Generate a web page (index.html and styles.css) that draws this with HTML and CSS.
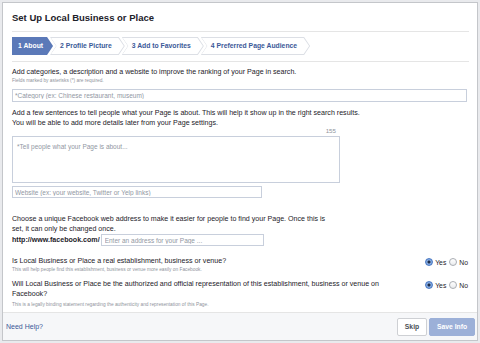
FILE: index.html
```html
<!DOCTYPE html>
<html>
<head>
<meta charset="utf-8">
<link rel="stylesheet" href="styles.css">
</head>
<body>
<div class="dialog">
  <div class="main">
    <h1 class="title">Set Up Local Business or Place</h1>
    <div class="tabs">
      <div class="tab first active"><span class="tab-in">1 About</span></div>
      <div class="tab"><span class="tab-in">2 Profile Picture</span></div>
      <div class="tab"><span class="tab-in">3 Add to Favorites</span></div>
      <div class="tab"><span class="tab-in">4 Preferred Page Audience</span></div>
    </div>
    <div class="content">
      <p class="text intro">Add categories, a description and a website to improve the ranking of your Page in search.</p>
      <p class="small">Fields marked by asterisks (*) are required.</p>
      <input class="field category" type="text" placeholder="*Category (ex: Chinese restaurant, museum)">
      <p class="text about">Add a few sentences to tell people what your Page is about. This will help it show up in the right search results. You will be able to add more details later from your Page settings.</p>
      <div class="counter">155</div>
      <textarea class="field area" placeholder="*Tell people what your Page is about..."></textarea>
      <input class="field website" type="text" placeholder="Website (ex: your website, Twitter or Yelp links)">
      <p class="text choose">Choose a unique Facebook web address to make it easier for people to find your Page. Once this is set, it can only be changed once.</p>
      <div class="url-row">
        <span class="url">http://www.facebook.com/</span>
        <input class="field address" type="text" placeholder="Enter an address for your Page ...">
      </div>
      <div class="question q1">
        <div class="q-text">
          <p class="text">Is Local Business or Place a real establishment, business or venue?</p>
          <p class="small">This will help people find this establishment, business or venue more easily on Facebook.</p>
        </div>
        <div class="radios">
          <span class="radio checked"></span><span class="rlabel">Yes</span>
          <span class="radio"></span><span class="rlabel">No</span>
        </div>
      </div>
      <div class="question q2">
        <div class="q-text">
          <p class="text">Will Local Business or Place be the authorized and official representation of this establishment, business or venue on Facebook?</p>
          <p class="small s2">This is a legally binding statement regarding the authenticity and representation of this Page.</p>
        </div>
        <div class="radios">
          <span class="radio checked"></span><span class="rlabel">Yes</span>
          <span class="radio"></span><span class="rlabel">No</span>
        </div>
      </div>
    </div>
  </div>
  <div class="footer">
    <a class="help" href="#">Need Help?</a>
    <div class="buttons">
      <button class="btn skip">Skip</button>
      <button class="btn save">Save Info</button>
    </div>
  </div>
</div>
</body>
</html>
```

FILE: styles.css
```css
* { box-sizing: border-box; }
html, body { margin: 0; padding: 0; }
body {
  background: #e9eaed;
  font-family: "Liberation Sans", Arial, sans-serif;
  color: #1d2129;
  width: 480px;
  height: 343px;
  overflow: hidden;
}
.dialog {
  margin: 2px;
  width: 476px;
  height: 339px;
  border: 1px solid #c4c6ca;
  background: #fff;
  display: flex;
  flex-direction: column;
}
.main {
  padding: 0 8px 0 9px;
  flex: 1;
}
.title {
  margin: 0;
  padding: 9px 0 7px 0;
  font-size: 9.5px;
  line-height: 12px;
  font-weight: bold;
  color: #1d2129;
  border-bottom: 1px solid #e5e5e5;
}
.tabs {
  display: flex;
  padding: 5px 0 6px 0;
  border-bottom: 1px solid #e5e5e5;
}
.tab {
  height: 18px;
  padding: 1px;
  background: #dcdfe5;
  margin-left: -3px;
  clip-path: polygon(0 0, calc(100% - 6px) 0, 100% 50%, calc(100% - 6px) 100%, 0 100%, 6px 50%);
}
.tab.first {
  margin-left: 0;
  clip-path: polygon(0 0, calc(100% - 6px) 0, 100% 50%, calc(100% - 6px) 100%, 0 100%);
}
.tab-in {
  display: block;
  height: 16px;
  line-height: 16px;
  background: #fff;
  color: #3b5998;
  font-weight: bold;
  font-size: 6.8px;
  padding: 0 12px 0 9px;
  white-space: nowrap;
  clip-path: polygon(0 0, calc(100% - 5.5px) 0, 100% 50%, calc(100% - 5.5px) 100%, 0 100%, 5.5px 50%);
}
.tab.active { background: #5b79b8; }
.tab.active .tab-in {
  background: #5b79b8;
  color: #fff;
  padding: 0 9px 0 5px;
  clip-path: polygon(0 0, calc(100% - 5.5px) 0, 100% 50%, calc(100% - 5.5px) 100%, 0 100%);
}
.content { padding-top: 5px; }
p { margin: 0; }
.text {
  font-size: 7.1px;
  line-height: 10px;
  color: #1d2129;
}
.small {
  font-size: 4.8px;
  line-height: 6px;
  color: #90949c;
  margin-top: 1px;
}
.field {
  display: block;
  border: 1px solid #c8cfdc;
  font-family: "Liberation Sans", Arial, sans-serif;
  font-size: 6.5px;
  color: #1d2129;
  padding: 0 2px;
  background: #fff;
  outline: none;
  margin: 0;
}
.field::placeholder { color: #9197a3; }
.category {
  margin-top: 5px;
  width: 455px;
  height: 13px;
}
.about { margin-top: 6px; width: 348px; }
.counter {
  width: 328px;
  text-align: right;
  padding-right: 4px;
  font-size: 6.2px;
  line-height: 8px;
  color: #90949c;
  margin-top: -1px;
}
.area {
  margin-top: 1px;
  width: 328px;
  height: 47px;
  resize: none;
  padding: 6px 4px;
  line-height: 8px;
}
.website {
  margin-top: 3px;
  width: 250px;
  height: 12px;
}
.choose { margin-top: 16px; width: 324px; }
.url-row {
  display: flex;
  align-items: center;
  height: 12px;
}
.url {
  font-size: 7.1px;
  font-weight: bold;
  color: #1d2129;
  margin-right: 1px;
}
.address {
  width: 163px;
  height: 12px;
  padding-left: 3px;
}
.question {
  display: flex;
  justify-content: space-between;
  align-items: flex-start;
}
.q1 { margin-top: 10px; }
.q2 { margin-top: 6px; }
.q-text { width: 385px; }
.s2 { margin-top: 3px; }
.radios {
  display: flex;
  align-items: center;
  height: 10px;
  padding-right: 1px;
  margin-top: 1px;
}
.radio {
  width: 8px;
  height: 8px;
  border-radius: 50%;
  border: 1px solid #a9adb3;
  background: linear-gradient(#ffffff, #e9ebee);
  display: inline-block;
}
.radio.checked {
  border-color: #4a78c2;
  background: radial-gradient(circle, #1d2d4a 0 1.3px, #8fb3e6 1.8px, #5e8fd6 100%);
}
.rlabel {
  font-size: 6.8px;
  color: #1d2129;
  margin: 0 3px 0 2px;
}
.rlabel:last-child { margin-right: 0; }
.footer {
  height: 28px;
  background: #f6f7f9;
  border-top: 1px solid #e5e5e5;
  display: flex;
  align-items: center;
  justify-content: space-between;
  padding: 0 2px 0 3px;
}
.help {
  font-size: 7px;
  color: #3b5998;
  text-decoration: none;
}
.buttons { display: flex; gap: 2px; }
.btn {
  height: 18px;
  font-family: "Liberation Sans", Arial, sans-serif;
  font-weight: bold;
  font-size: 6.8px;
  border-radius: 2px;
  padding: 0;
  margin: 0;
}
.skip {
  width: 30px;
  background: #fff;
  border: 1px solid #ced0d4;
  color: #4b4f56;
}
.save {
  width: 46px;
  background: #9cb0d8;
  border: 1px solid #9cb0d8;
  color: #fff;
}
```
